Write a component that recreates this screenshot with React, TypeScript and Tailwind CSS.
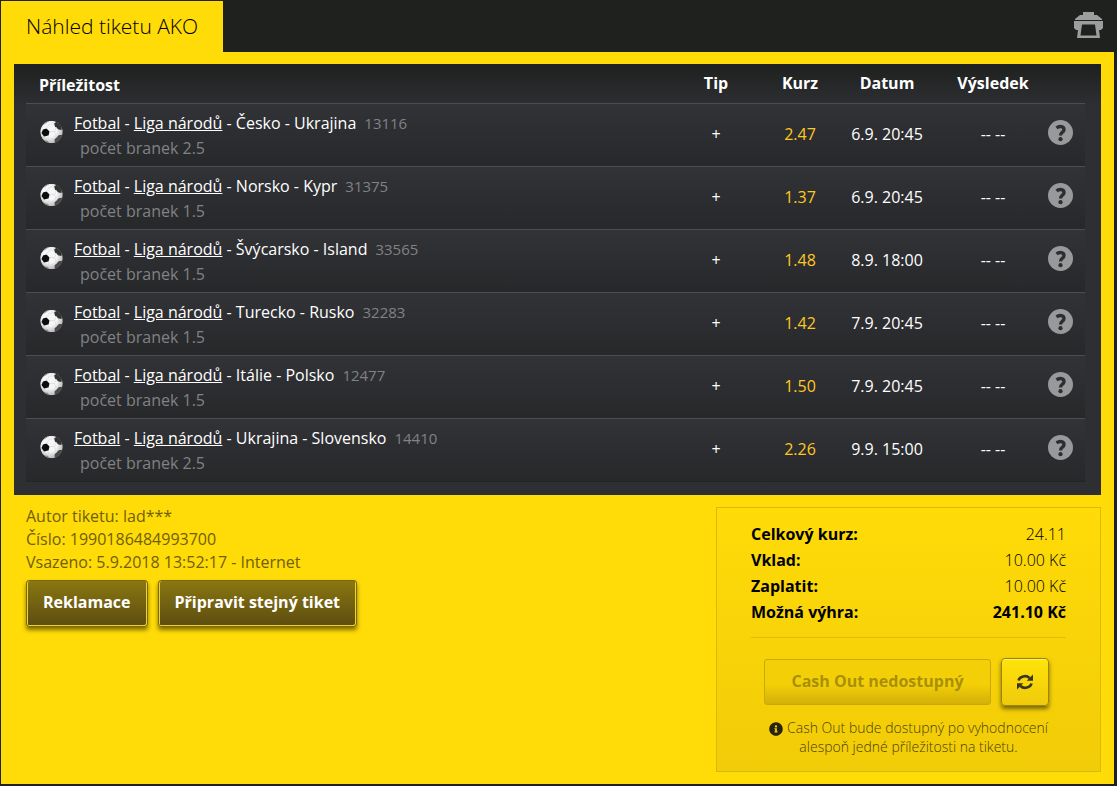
import { FaInfoCircle } from "react-icons/fa";

const bets = [
  { match: "Česko - Ukrajina", code: "13116", goals: "2.5", odds: "2.47", date: "6.9. 20:45" },
  { match: "Norsko - Kypr", code: "31375", goals: "1.5", odds: "1.37", date: "6.9. 20:45" },
  { match: "Švýcarsko - Island", code: "33565", goals: "1.5", odds: "1.48", date: "8.9. 18:00" },
  { match: "Turecko - Rusko", code: "32283", goals: "1.5", odds: "1.42", date: "7.9. 20:45" },
  { match: "Itálie - Polsko", code: "12477", goals: "1.5", odds: "1.50", date: "7.9. 20:45" },
  { match: "Ukrajina - Slovensko", code: "14410", goals: "2.5", odds: "2.26", date: "9.9. 15:00" },
];

const summary = [
  { label: "Celkový kurz:", value: "24.11" },
  { label: "Vklad:", value: "10.00 Kč" },
  { label: "Zaplatit:", value: "10.00 Kč" },
  { label: "Možná výhra:", value: "241.10 Kč", strong: true },
];

const PrinterIcon = () => (
  <svg viewBox="0 0 30 26" className="w-[30px] h-[26px]" aria-hidden="true">
    <path d="M10 0h11v3h3l5 4v1H2V7l5-4h3z" fill="#9c9e9d" />
    <path fillRule="evenodd" d="M1 9h29v7l-2 2h-2l1 8H4l1-8H3l-2-2zM9 12.500 7.500 23.500h16L22 12.500z" fill="#9c9e9d" />
  </svg>
);

const BallIcon = () => (
  <svg viewBox="0 0 24 24" className="w-6 h-6" aria-hidden="true">
    <defs>
      <radialGradient id="ball" cx="0.42" cy="0.4" r="0.62">
        <stop offset="0.5" stopColor="#f6f6f6" />
        <stop offset="1" stopColor="#b5b5b5" />
      </radialGradient>
      <clipPath id="ballEdge">
        <circle cx="12.500" cy="12" r="11.300" />
      </clipPath>
    </defs>
    <g clipPath="url(#ballEdge)">
      <circle cx="12.500" cy="12" r="11.300" fill="url(#ball)" />
      <path d="M4 9.500 7.500 8.500 10.500 11.500 9.500 15.500 5 16.500 2.500 13z" fill="#0c0c0c" />
      <path d="M15 3.500 18 1.500l5 4.500-.5 4-3-.5-3.500-3z" fill="#333" />
      <path d="M15.500 19.500 20 15l4 0-4 9h-4z" fill="#4a4a4a" />
      <path d="M4 20l5 1 2 3H6z" fill="#888" />
      <path d="M3 5 8 0l2 1-4 3z" fill="#999" />
      <path d="M10.500 11.500h5l2 6M15.500 11.500 17.500 7M7.500 8.500l3-4.500 5 0M9 15.500l1 6" fill="none" stroke="#dadada" strokeWidth="0.7" />
    </g>
  </svg>
);

const QuestionIcon = () => (
  <svg viewBox="0 0 25 25" className="size-[25px]" aria-hidden="true">
    <circle cx="12.500" cy="12.500" r="12.500" fill="#98999a" />
    <path d="M8.500 7.800C11.500 5.700 16 6.200 16 9.400c0 3-3.500 2.900-3.500 6.200" fill="none" stroke="#2d2e31" strokeWidth="3.400" />
    <circle cx="12.500" cy="19.200" r="2.100" fill="#2d2e31" />
  </svg>
);

const RefreshIcon = () => (
  <svg viewBox="0 0 16 16" className="w-4 h-4" aria-hidden="true">
    <path d="M1.500 6.500C2.500 2.500 9 .5 12.500 4M14.500 9.500C13.500 13.500 7 15.500 3.500 12" fill="none" stroke="#3a351c" strokeWidth="2.600" />
    <path d="M16 .5v6.300H9.700zM0 15.500V9.200h6.300z" fill="#3a351c" />
  </svg>
);

const ticketButton =
  "h-[47px] px-4 pb-[2px] rounded-[3px] border border-[#7a6a0c] bg-linear-to-b from-[#8a7710] to-[#5c4d10] font-bold text-white shadow-[inset_-1px_-1px_0_#f0d230,inset_1px_0_0_#f0d230,0_3px_4px_#00000080]";

export default function App() {
  return (
    <div className="bg-[#1f211f] pt-px pl-px pr-[3px] pb-[2px] text-base text-white font-['Open_Sans','Noto_Sans',sans-serif]">
      <header className="flex justify-between">
        <h1 className="h-[51px] w-[222px] bg-[#ffdb08] pl-[25px] pt-[9px] text-[21px] leading-8 font-light text-black">
          Náhled tiketu AKO
        </h1>
        <button aria-label="Vytisknout" className="mr-[11px] pb-1">
          <PrinterIcon />
        </button>
      </header>

      <main className="bg-[#ffdb08] px-[13px] py-3">
        <div className="bg-linear-to-b from-[#1f211f] to-[#2e2f33] to-10% pl-3 pr-4 pb-[13px]">
          <table className="w-full table-fixed border-separate border-spacing-0 border-b border-[#232426]">
            <thead>
              <tr className="h-[39px] leading-6">
                <th colSpan={2} className="p-0 pl-[13px] pt-[2px] text-left">Příležitost</th>
                <th className="w-24 p-0 pb-px">Tip</th>
                <th className="w-[72px] p-0 pb-px">Kurz</th>
                <th className="w-[102px] p-0 pb-px">Datum</th>
                <th className="w-[110px] p-0 pb-px">Výsledek</th>
                <th className="w-[37px] p-0" aria-label="Stav"></th>
              </tr>
            </thead>
            <tbody>
              {bets.map((bet) => (
                <tr
                  key={bet.code}
                  className="h-[63px] bg-linear-to-b from-[#323337] to-[#27282a] text-center *:border-t *:border-[#4b4d50] *:p-0 *:pb-[2px]"
                >
                  <td colSpan={2}>
                    <div className="flex items-start pl-[13px] text-left">
                      <div className="pt-3">
                        <BallIcon />
                      </div>
                      <div className="ml-[11px] pt-[3px] leading-[25px] whitespace-nowrap">
                        <div>
                          <a href="#" className="underline">Fotbal</a> - <a href="#" className="underline">Liga národů</a> - {bet.match}
                          <span className="ml-2 text-[15px] text-[#808285]">{bet.code}</span>
                        </div>
                        <div className="pl-[6px] text-[#808285]">počet branek {bet.goals}</div>
                      </div>
                    </div>
                  </td>
                  <td>+</td>
                  <td className="text-[#ffc820]">{bet.odds}</td>
                  <td>{bet.date}</td>
                  <td>-- --</td>
                  <td>
                    <div className="pb-[3px]">
                      <QuestionIcon />
                    </div>
                  </td>
                </tr>
              ))}
            </tbody>
          </table>
        </div>

        <div className="flex items-start justify-between">
          <section className="pl-3 pt-[10px] leading-[23px] text-[#706005]">
            <p>Autor tiketu: lad***</p>
            <p>Číslo: 1990186484993700</p>
            <p>Vsazeno: 5.9.2018 13:52:17 - Internet</p>
            <div className="mt-[6px] flex gap-[10px]">
              <button className={ticketButton}>Reklamace</button>
              <button className={ticketButton}>Připravit stejný tiket</button>
            </div>
          </section>

          <section className="mt-3 w-[385px] border border-[#d9b90a] bg-linear-to-b from-[#ffdb08] to-[#f1cc08] px-[34px] pt-[13px] pb-[15px] text-black">
            <dl className="leading-[26px]">
              {summary.map((item) => (
                <div key={item.label} className="flex justify-between">
                  <dt className="font-bold">{item.label}</dt>
                  <dd className={item.strong ? "font-bold" : "font-light"}>{item.value}</dd>
                </div>
              ))}
            </dl>
            <hr className="mt-3 border-[#dfbd0a]" />
            <div className="mt-5 flex items-center gap-[10px] pl-[13px]">
              <button disabled className="h-[46px] w-[227px] rounded-[3px] border border-[#c9a90a] bg-linear-to-b from-[#f3cf07] from-55% to-[#d3b007] pb-[2px] font-bold text-[#a98f08]">
                Cash Out nedostupný
              </button>
              <button aria-label="Obnovit" className="flex size-[48px] items-center justify-center rounded-[4px] border border-[#9d8508] bg-linear-to-b from-[#ffe30a] to-[#efca0b] shadow-[inset_0_1px_0_#fff27a,0_3px_4px_#00000080]">
                <RefreshIcon />
              </button>
            </div>
            <p className="mt-3 text-center text-sm leading-[19px] font-light text-[#4d4204]">
              <FaInfoCircle className="mr-1 inline size-[14px] text-[#26230f]" />
              Cash Out bude dostupný po vyhodnocení
              <br />
              alespoň jedné příležitosti na tiketu.
            </p>
          </section>
        </div>
      </main>
    </div>
  );
}
